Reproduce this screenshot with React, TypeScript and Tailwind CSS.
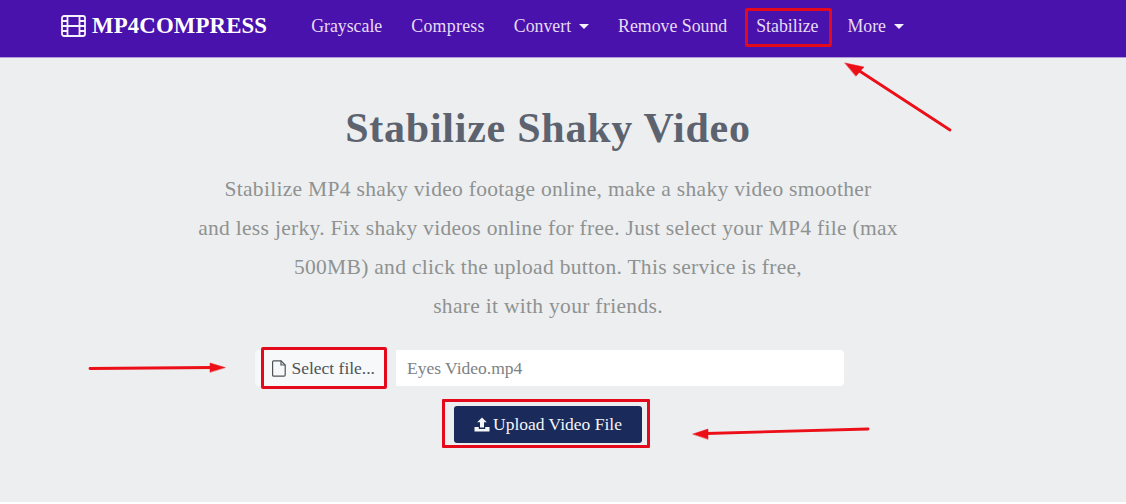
const serif = { fontFamily: '"Liberation Serif", serif' };

function Caret() {
  return <span className="ml-[8px] inline-block h-0 w-0 border-x-[5px] border-t-[5px] border-x-transparent border-t-[#f6f2fb]" />;
}

function FilmIcon() {
  return (
    <svg width="25" height="22" viewBox="0 0 25 22" fill="none" stroke="#f6f2fb" strokeWidth="1.8">
      <rect x="1" y="1" width="23" height="20" rx="2" />
      <path d="M6.5 1 V21 M18.5 1 V21 M6.5 11 H18.5" />
      <path d="M1 6 H6.5 M1 11 H6.5 M1 16 H6.5 M18.5 6 H24 M18.5 11 H24 M18.5 16 H24" />
    </svg>
  );
}

function FileIcon() {
  return (
    <svg width="14" height="17" viewBox="0 0 14 17" fill="none" stroke="#4e5358" strokeWidth="1.2">
      <path d="M1.6 0.8 H9 L13.2 5 V15 Q13.2 16.2 12 16.2 H1.6 Q0.6 16.2 0.6 15 V2 Q0.6 0.8 1.6 0.8 Z" />
      <path d="M9 0.8 V5 H13.2" />
    </svg>
  );
}

function UploadIcon() {
  return (
    <svg width="16" height="15" viewBox="0 0 16 15" fill="#f4f5f8">
      <path d="M8 0.5 L12.8 5.3 H10 V10.5 H6 V5.3 H3.2 Z" />
      <path d="M0.5 10 H4.8 V12 H11.2 V10 H15.5 V14.5 H0.5 Z" />
    </svg>
  );
}

function Arrows() {
  return (
    <svg className="pointer-events-none absolute left-0 top-0" width="1126" height="504">
      <g fill="#ec0f18" stroke="#ec0f18" strokeLinecap="round">
        <line x1="950" y1="130" x2="858" y2="70" strokeWidth="2.8" />
        <path d="M845 63 L864 67 L856 76 Z" strokeWidth="0.5" />
        <line x1="90" y1="368.5" x2="212" y2="367.5" strokeWidth="2.8" />
        <path d="M225 367.5 L210 363 L210 372 Z" strokeWidth="0.5" />
        <line x1="868" y1="429" x2="706" y2="433.5" strokeWidth="2.8" />
        <path d="M693 434 L708 429 L708 439 Z" strokeWidth="0.5" />
      </g>
    </svg>
  );
}

export default function App() {
  return (
    <div className="relative h-[504px] w-[1126px] overflow-hidden bg-white" style={serif}>
      {/* Navbar */}
      <header className="flex h-[58px] items-center border-b border-[#b39ad8] bg-[#4a12ac] pb-[5px] pl-[61px]">
        <div className="flex items-center gap-[6px] text-white">
          <FilmIcon />
          <span className="text-[22.8px] font-bold tracking-[0.15px]">MP4COMPRESS</span>
        </div>
        <nav className="ml-[44px] flex items-center gap-[29px] text-[17.8px] text-[#e6dcf3]">
          <span>Grayscale</span>
          <span className="tracking-[0.3px]">Compress</span>
          <span className="flex items-center">Convert<Caret /></span>
          <span>Remove Sound</span>
          <span className="relative">
            Stabilize
            <span className="absolute -left-[11px] -right-[14px] -top-[5px] -bottom-[8px] rounded-[2px] border-[3px] border-[#e40a1c]" />
          </span>
          <span className="flex items-center">More<Caret /></span>
        </nav>
      </header>

      {/* Main */}
      <main className="flex h-[444px] flex-col items-center bg-[#edeef0] pr-[30px] pt-[45px]">
        <h1 className="text-[42px] font-bold leading-[50px] tracking-[0.75px] text-[#5c636f]">Stabilize Shaky Video</h1>
        <p className="mt-[17px] w-[760px] text-center text-[21.5px] leading-[39px] tracking-[0.3px] text-[#8e9290]">
          Stabilize MP4 shaky video footage online, make a shaky video smoother
          <br />
          and less jerky. Fix shaky videos online for free. Just select your MP4 file (max
          <br />
          500MB) and click the upload button. This service is free,
          <br />
          share it with your friends.
        </p>

        <div className="ml-[3px] mt-[24px] flex h-[36px] w-[589px] text-[17.5px]">
          <div className="relative flex w-[131px] items-center justify-end gap-[5px] rounded-l bg-[#f6f8fa] pr-[11px] text-[#4e5358]">
            <FileIcon />
            <span>Select file...</span>
            <span className="absolute -top-[3px] -bottom-[3px] left-[6px] -right-[1px] rounded-[2px] border-[3px] border-[#e40a1c]" />
          </div>
          <div className="ml-[10px] flex flex-1 items-center rounded-r-[4px] bg-white pl-[11px] text-[#7d8184]">
            Eyes Video.mp4
          </div>
        </div>

        <div className="relative mt-[20px]">
          <button className="flex h-[37px] w-[188px] items-center justify-center gap-[3px] rounded-[3px] bg-[#1a2a5a] text-[17.5px] text-[#f4f5f8]">
            <UploadIcon />
            Upload Video File
          </button>
          <span className="absolute -left-[12px] -right-[8px] -top-[7px] -bottom-[5px] rounded-[1px] border-[3px] border-[#e40a1c]" />
        </div>
      </main>

      <Arrows />
    </div>
  );
}
